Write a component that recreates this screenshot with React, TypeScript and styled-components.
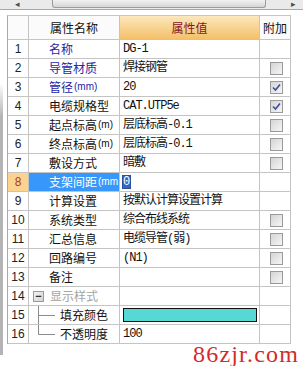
import React from 'react'
import styled, { createGlobalStyle } from 'styled-components'

type Row = {
  name: string
  unit?: string
  value?: string
  tone?: 'required' | 'group'
  check?: 'on' | 'off'
  tree?: 'mid' | 'last' | 'group'
  selected?: boolean
  swatch?: boolean
}

const rows: Row[] = [
  { name: '名称', value: 'DG-1', tone: 'required' },
  { name: '导管材质', value: '焊接钢管', tone: 'required', check: 'off' },
  { name: '管径', unit: '(mm)', value: '20', tone: 'required', check: 'on' },
  { name: '电缆规格型', value: 'CAT.UTP5e', check: 'on' },
  { name: '起点标高', unit: '(m)', value: '层底标高-0.1', check: 'off' },
  { name: '终点标高', unit: '(m)', value: '层底标高-0.1', check: 'off' },
  { name: '敷设方式', value: '暗敷', check: 'off' },
  { name: '支架间距', unit: '(mm', value: '0', selected: true },
  { name: '计算设置', value: '按默认计算设置计算' },
  { name: '系统类型', value: '综合布线系统', check: 'off' },
  { name: '汇总信息', value: '电缆导管(弱)', check: 'off' },
  { name: '回路编号', value: '(N1)', check: 'off' },
  { name: '备注', check: 'off' },
  { name: '显示样式', tone: 'group', tree: 'group' },
  { name: '填充颜色', tree: 'mid', swatch: true },
  { name: '不透明度', tree: 'last', value: '100' },
]

const App = () => (
  <Page>
    <GlobalStyle />
    <ScrollBar>
      <ArrowBtn>◂</ArrowBtn>
      <Thumb />
      <ArrowBtn>▸</ArrowBtn>
    </ScrollBar>
    <Body>
      <SideEdge />
      <Grid>
        <HeadCell />
        <HeadCell>属性名称</HeadCell>
        <HeadCell $accent>属性值</HeadCell>
        <HeadCell>附加</HeadCell>
        {rows.map((r, i) => (
          <React.Fragment key={r.name}>
            <NumCell $selected={r.selected}>{i + 1}</NumCell>
            <NameCell $selected={r.selected} $tone={r.tone} $tree={!!r.tree}>
              {r.tree === 'group' && <Toggle>−</Toggle>}
              {(r.tree === 'mid' || r.tree === 'last') && (
                <svg width="27" height="19" viewBox="0 0 27 19">
                  <path
                    d={r.tree === 'mid' ? 'M5.5 0V19M5.5 9.5H22' : 'M5.5 0V9.5H22'}
                    stroke="#8c8c8c"
                    fill="none"
                  />
                </svg>
              )}
              {r.name}
              {r.unit && <Unit>{r.unit}</Unit>}
            </NameCell>
            <ValueCell>
              {r.selected ? <Editing>{r.value}</Editing> : r.value}
              {r.swatch && <Swatch />}
            </ValueCell>
            <CheckCell>
              {r.check && (
                <Box>
                  {r.check === 'on' && (
                    <svg width="11" height="11" viewBox="0 0 11 11">
                      <path d="M2 5.5L4.5 8L9 2.5" stroke="#3a4fa0" strokeWidth="1.6" fill="none" />
                    </svg>
                  )}
                </Box>
              )}
            </CheckCell>
          </React.Fragment>
        ))}
      </Grid>
    </Body>
    <Watermark>86zjr.com</Watermark>
  </Page>
)

export default App

const GlobalStyle = createGlobalStyle`
  body {
    margin: 0;
    background: #fff;
    font-family: "Liberation Sans", "Noto Sans CJK SC", sans-serif;
  }
`

const Page = styled.div`
  position: relative;
  width: 303px;
  height: 366px;
  background: #fff;
  overflow: hidden;
`

const ScrollBar = styled.div`
  display: flex;
  align-items: center;
  height: 9px;
  background: #eaeaea;
  border-bottom: 1px solid #a8a8a8;
  padding: 0 4px 0 12px;
`

const ArrowBtn = styled.span`
  width: 12px;
  font-size: 9px;
  line-height: 9px;
  color: #505050;
  text-align: center;
  &:first-child {
    margin-right: 28px;
  }
  &:last-child {
    margin-left: 21px;
  }
`

const Thumb = styled.div`
  width: 216px;
  height: 8px;
  margin-top: -2px;
  box-sizing: border-box;
  border: 1px solid #9c9c9c;
  border-top: none;
  border-radius: 0 0 3px 3px;
  background: linear-gradient(#f2f2f2, #d6d6d6);
`

const Body = styled.div`
  display: flex;
  padding: 5px 0 0 0;
`

const SideEdge = styled.div`
  width: 3px;
  margin-right: 4px;
  background: linear-gradient(#fff 0, #fff 20%, #b4b4b4 30%, #b4b4b4 100%);
  height: 340px;
`

const Grid = styled.div`
  display: grid;
  grid-template-columns: 21px 91px 140px 31px;
  grid-template-rows: 24px repeat(16, 19px);
  border-top: 1px solid #c4c4c4;
  border-left: 1px solid #a9a9a9;
  height: fit-content;
  font-size: 12px;
`

const Cell = styled.div`
  box-sizing: border-box;
  border-right: 1px solid #c4c4c4;
  border-bottom: 1px solid #c4c4c4;
  display: flex;
  align-items: center;
  white-space: nowrap;
  overflow: hidden;
  line-height: 18px;
`

const HeadCell = styled(Cell)<{ $accent?: boolean }>`
  justify-content: center;
  font-family: "Noto Sans CJK SC", sans-serif;
  font-size: 12px;
  color: ${(p) => (p.$accent ? '#8a1424' : '#111')};
  background: ${(p) => (p.$accent ? 'linear-gradient(#fde7bd, #f4c069)' : '#fbfbfb')};
  padding-top: 1px;
`

const NumCell = styled(Cell)<{ $selected?: boolean }>`
  justify-content: center;
  font-size: 12px;
  color: ${(p) => (p.$selected ? '#b03a1c' : '#222')};
  background: ${(p) => (p.$selected ? '#fbd38e' : '#fff')};
`

const toneColor = { required: '#2326a6', group: '#a4a4a4' }

const NameCell = styled(Cell)<{ $selected?: boolean; $tone?: 'required' | 'group'; $tree: boolean }>`
  padding-left: ${(p) => (p.$tree ? '4px' : '20px')};
  font-family: "Noto Sans CJK SC", sans-serif;
  color: ${(p) => (p.$selected ? '#fff' : p.$tone ? toneColor[p.$tone] : '#111')};
  background: ${(p) => (p.$selected ? '#3797fb' : '#fff')};
  svg {
    flex: none;
  }
`

const Unit = styled.span`
  font-family: "Liberation Sans", sans-serif;
  font-size: 10px;
  margin-left: 1px;
`

const Toggle = styled.span`
  flex: none;
  box-sizing: border-box;
  width: 11px;
  height: 11px;
  margin-right: 6px;
  border: 1px solid #9a9a9a;
  background: linear-gradient(135deg, #f4f4f4, #d2d2d2);
  color: #333;
  font-family: "Liberation Sans", sans-serif;
  font-size: 11px;
  line-height: 8px;
  text-align: center;
  font-weight: bold;
`

const ValueCell = styled(Cell)`
  padding-left: 3px;
  font-family: "Liberation Mono", "Noto Sans CJK SC", monospace;
  letter-spacing: -1px;
  color: #111;
`

const Editing = styled.span`
  background: #3366c8;
  color: #fff;
  line-height: 12px;
  padding: 0 1px 0 0;
  outline: 1px solid #2a4f9c;
`

const Swatch = styled.div`
  width: 134px;
  height: 14px;
  box-sizing: border-box;
  border: 1px solid #111;
  background: #56d8d4;
`

const CheckCell = styled(Cell)`
  justify-content: center;
  padding-left: 2px;
`

const Box = styled.span`
  box-sizing: border-box;
  width: 13px;
  height: 13px;
  border: 1px solid #9a9a9a;
  background: linear-gradient(135deg, #d4d4d4, #f6f6f6);
  display: flex;
  align-items: center;
  justify-content: center;
`

const Watermark = styled.div`
  position: absolute;
  left: 193px;
  bottom: 0;
  font-family: "Liberation Serif", serif;
  font-size: 24px;
  letter-spacing: 1.2px;
  line-height: 24px;
  color: #d42a2a;
`
